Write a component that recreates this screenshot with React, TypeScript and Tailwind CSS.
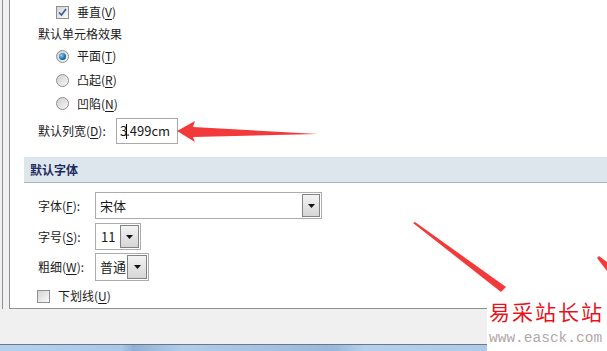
import React from "react"

const font = "font-['Microsoft_YaHei','Noto_Sans_CJK_SC',sans-serif]"

const Radio: React.FC<{ checked?: boolean }> = ({ checked }) => (
  <span className="flex h-[13px] w-[13px] items-center justify-center rounded-full border border-[#8f8f8f] bg-gradient-to-br from-[#cfcfcf] to-[#f7f7f7]">
    {checked && (
      <span className="h-[7px] w-[7px] rounded-full bg-[radial-gradient(circle_at_35%_35%,#8fd2f5,#1c66a8_60%,#0d3f73)]" />
    )}
  </span>
)

const Check: React.FC<{ checked?: boolean }> = ({ checked }) => (
  <span className="flex h-[13px] w-[13px] items-center justify-center border border-[#8f8f8f] bg-gradient-to-br from-[#d4d4d4] to-[#fafafa]">
    {checked && (
      <svg width="9" height="9" viewBox="0 0 9 9">
        <path d="M1 4.5 L3.5 7 L8 1" stroke="#3a5a9c" strokeWidth="1.6" fill="none" />
      </svg>
    )}
  </span>
)

const DropButton: React.FC<{ w: string }> = ({ w }) => (
  <span
    className={`${w} flex h-full items-center justify-center border border-[#838383] bg-gradient-to-b from-[#f3f3f3] to-[#d6d6d6]`}
  >
    <svg width="7" height="4" viewBox="0 0 7 4">
      <path d="M0 0 H7 L3.5 4 Z" fill="#111" />
    </svg>
  </span>
)

const Mn: React.FC<{ k: string }> = ({ k }) => (
  <>
    (<span className="underline underline-offset-2">{k}</span>)
  </>
)

export default function App() {
  return (
    <div className={`relative h-[351px] w-[607px] overflow-hidden bg-[#f0f0f0] text-[12px] text-[#1a1a1a] ${font}`}>
      <div className="flex h-[309px] pl-[2px]">
        <div className="flex flex-1 border-l border-[#8c9096] bg-[#f0f0f0] pl-[6px]">
          <div className="flex flex-1 flex-col border-b border-l border-[#8c9096] bg-white">
            <div className="flex h-[24px] items-center gap-[8px] pl-[46px]">
              <Check checked />
              <span>
                垂直<Mn k="V" />
              </span>
            </div>
            <div className="flex h-[20px] items-center pl-[28px]">默认单元格效果</div>
            <div className="flex h-[24px] items-center gap-[8px] pl-[46px]">
              <Radio checked />
              <span>
                平面<Mn k="T" />
              </span>
            </div>
            <div className="flex h-[24px] items-center gap-[8px] pl-[46px]">
              <Radio />
              <span>
                凸起<Mn k="R" />
              </span>
            </div>
            <div className="flex h-[23px] items-center gap-[8px] pl-[46px]">
              <Radio />
              <span>
                凹陷<Mn k="N" />
              </span>
            </div>
            <div className="mt-[3px] flex h-[26px] items-center pl-[28px]">
              <span className="w-[78px]">
                默认列宽<Mn k="D" />:
              </span>
              <div className="flex h-[26px] w-[62px] items-center border border-[#a9a9a9] pl-[3px] text-[13px]">
                3<span className="mx-[-1px] inline-block h-[15px] w-[1px] bg-black" />.499cm
              </div>
            </div>
            <div className="ml-[14px] mt-[13px] flex h-[26px] items-center border-b border-[#aeb6bd] bg-[#dde6ed] pl-[6px] font-bold text-[#1f2a5c]">
              默认字体
            </div>
            <div className="mt-[9px] flex h-[27px] items-center pl-[28px]">
              <span className="w-[57px]">
                字体<Mn k="F" />:
              </span>
              <div className="flex h-[27px] w-[227px] items-center justify-between border border-[#acacac] p-px">
                <span className="pl-[3px] text-[13px]">宋体</span>
                <DropButton w="w-[18px]" />
              </div>
            </div>
            <div className="mt-[4px] flex h-[27px] items-center pl-[28px]">
              <span className="w-[57px]">
                字号<Mn k="S" />:
              </span>
              <div className="flex h-[27px] w-[46px] items-center justify-between border border-[#acacac] p-px">
                <span className="pl-[4px] text-[13px]">11</span>
                <DropButton w="w-[19px]" />
              </div>
            </div>
            <div className="mt-[3px] flex h-[28px] items-center pl-[28px]">
              <span className="w-[57px]">
                粗细<Mn k="W" />:
              </span>
              <div className="flex h-[28px] w-[54px] items-center justify-between border border-[#acacac] p-px">
                <span className="pl-[3px] text-[13px]">普通</span>
                <DropButton w="w-[20px]" />
              </div>
            </div>
            <div className="mt-[7px] flex h-[16px] items-center gap-[8px] pl-[27px]">
              <Check />
              <span>
                下划线<Mn k="U" />
              </span>
            </div>
          </div>
        </div>
      </div>
      <div className="h-[36px] border-b border-[#6f7780]" />
      <div className="h-[6px] bg-[linear-gradient(90deg,#b4d2f0_0%,#a9c8ea_20%,#8fb0d6_22%,#b1cdec_30%,#9ab8dc_55%,#b4d0ee_60%,#a7c4e6_100%)]" />

      <svg className="pointer-events-none absolute left-0 top-0" width="607" height="351" viewBox="0 0 607 351">
        <polygon points="177,131 195,121 193,127 318,134 193,137 195,142" fill="#f23a3a" />
        <polygon points="413,223 415,222 506,287 501,292" fill="#f23a3a" />
        <polygon points="597,258 599,256 607,262 607,271" fill="#f23a3a" />
      </svg>

      <div className="absolute left-[487px] top-[293px] flex h-[58px] w-[120px] flex-col bg-white pl-[2px] pt-[3px]">
        <span className="text-[21px] leading-[30px] tracking-[2px] text-[#e8121c]">易采站长站</span>
        <span className="pt-[2px] font-['Liberation_Mono',monospace] text-[14.5px] leading-[20px] text-[#b3a7aa]">www.easck.com</span>
      </div>
    </div>
  )
}
